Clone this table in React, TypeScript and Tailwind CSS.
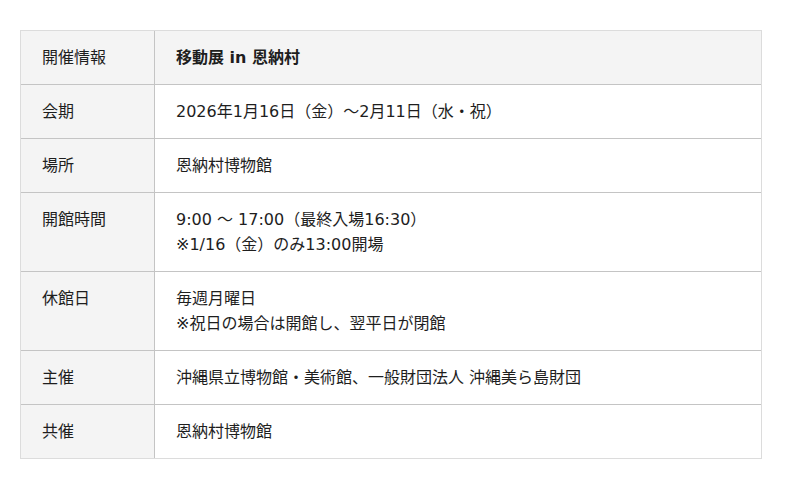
const rows: { label: string; lines: string[]; bold?: boolean }[] = [
  { label: '開催情報', lines: ['移動展 in 恩納村'], bold: true },
  { label: '会期', lines: ['2026年1月16日（金）～2月11日（水・祝）'] },
  { label: '場所', lines: ['恩納村博物館'] },
  { label: '開館時間', lines: ['9:00 ～ 17:00（最終入場16:30）', '※1/16（金）のみ13:00開場'] },
  { label: '休館日', lines: ['毎週月曜日', '※祝日の場合は開館し、翌平日が閉館'] },
  { label: '主催', lines: ['沖縄県立博物館・美術館、一般財団法人 沖縄美ら島財団'] },
  { label: '共催', lines: ['恩納村博物館'] },
];

export default function App() {
  return (
    <div className="min-h-[489px] bg-white pt-[30px] pl-[20px] font-['DejaVu_Sans','Noto_Sans_CJK_JP',sans-serif] text-[16px] leading-[25px] text-[#1e1e1e]">
      <div className="w-[742px] border border-[#dcdcdc]">
        {rows.map((row, i) => (
          <div
            key={row.label}
            className={`flex ${i > 0 ? 'border-t border-[#c4c4c4]' : ''} ${row.bold ? 'bg-[#f4f4f4]' : ''}`}
          >
            <div className="w-[134px] shrink-0 border-r border-[#c4c4c4] bg-[#f4f4f4] px-[21px] py-[14px]">
              {row.label}
            </div>
            <div className={`flex-1 px-[21px] py-[14px] ${row.bold ? 'font-bold' : ''}`}>
              {row.lines.map((line) => (
                <div key={line}>{line}</div>
              ))}
            </div>
          </div>
        ))}
      </div>
    </div>
  );
}
